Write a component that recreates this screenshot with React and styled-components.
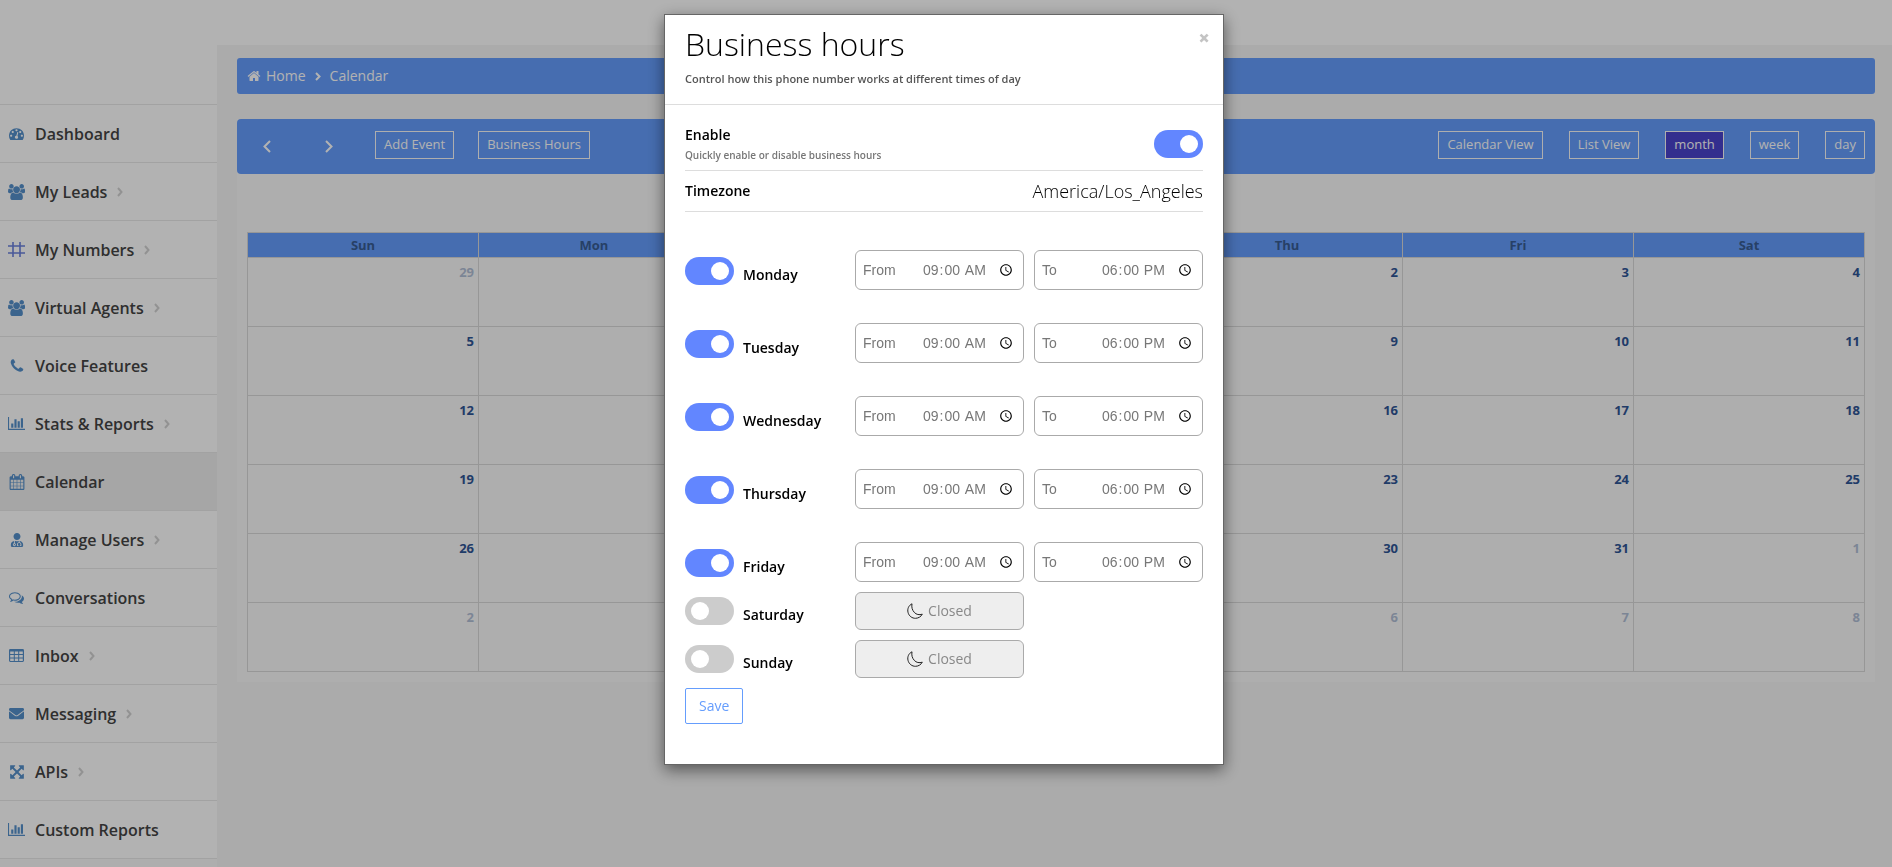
import React from "react";
import styled, { createGlobalStyle, css } from "styled-components";
import { FaUserMd, FaEnvelope } from "react-icons/fa";

const Global = createGlobalStyle`
  *, *::before, *::after { box-sizing: border-box; }
  body {
    margin: 0;
    background: #f5f5f5;
    font-family: "Open Sans", sans-serif;
    font-size: 14px;
    line-height: 20px;
    color: #000;
    overflow: hidden;
  }
  button, input { font-family: inherit; }
`;

const blue = "#659dfd";

const Page = styled.div`
  display: flex;
  height: 100vh;
  overflow: hidden;
`;

const Sidebar = styled.aside`
  flex: 0 0 217px;
  background: #fafafa;
`;

const Brand = styled.div`
  height: 104px;
  background: #fff;
`;

const NavList = styled.ul`
  list-style: none;
  margin: 0;
  padding: 0;
  border-bottom: 1px solid #e9e9e9;
`;

const NavItem = styled.li`
  border-top: 1px solid #e9e9e9;
  background: ${(p) => (p.$active ? "#eeeeee" : "#ffffff")};
`;

const NavLink = styled.a`
  display: flex;
  align-items: center;
  height: 57px;
  color: #444;
  font-size: 16px;
  font-weight: 600;
  text-decoration: none;
  > span { margin-right: 10px; }
`;

const NavIcon = styled.i`
  display: flex;
  justify-content: center;
  width: 33px;
  margin-right: 2px;
  color: ${(p) => p.$tint || "#5590cb"};
`;

const Main = styled.div`
  flex: 1;
  min-width: 0;
`;

const TopBar = styled.header`
  height: 45px;
  background: #fff;
`;

const Content = styled.main`
  padding: 13px 17px 0 20px;
`;

const Breadcrumb = styled.nav`
  display: flex;
  align-items: center;
  gap: 9px;
  height: 36px;
  padding: 0 10px;
  border-radius: 3px;
  background: ${blue};
  color: #fff;
`;

const Crumb = styled.a`
  display: flex;
  align-items: center;
  gap: 5px;
  color: #fff;
  text-decoration: none;
`;

const Panel = styled.section`
  margin-top: 25px;
  padding-bottom: 10px;
  background: #f9f9f9;
`;

const Toolbar = styled.div`
  display: flex;
  align-items: center;
  justify-content: space-between;
  height: 55px;
  padding: 0 10px 3px 14px;
  border-radius: 4px;
  background: ${blue};
`;

const ButtonGroup = styled.div`
  display: flex;
  align-items: center;
  gap: ${(p) => p.$gap};
`;

const ArrowButton = styled.button`
  display: flex;
  align-items: center;
  justify-content: center;
  width: 32px;
  height: 28px;
  margin-right: 6px;
  padding: 3px 0 0;
  border: 0;
  background: none;
  color: #fff;
`;

const ToolButton = styled.button`
  height: 28px;
  padding: 0 8px 2px;
  border: 1px solid #f9f9f9;
  background: ${(p) => (p.$active ? "#4a43cc" : "transparent")};
  color: #fff;
  font-size: 13px;
  line-height: 20px;
`;

const MonthTable = styled.table`
  width: calc(100% - 20px);
  margin: 58px 10px 0;
  border-collapse: collapse;
  table-layout: fixed;
  th, td { border: 1px solid #d8d8d8; }
  th {
    height: 25px;
    padding: 0;
    background: ${blue};
    color: #385c92;
    font-size: 13px;
    line-height: 20px;
    font-weight: 700;
  }
  td {
    height: 69px;
    padding: 4px;
    vertical-align: top;
    text-align: right;
  }
`;

const DayNumber = styled.span`
  font-size: 13px;
  font-weight: 700;
  color: #2f5596;
  opacity: ${(p) => (p.$muted ? 0.35 : 1)};
`;

const Overlay = styled.div`
  position: fixed;
  inset: 0;
  display: flex;
  align-items: flex-start;
  justify-content: center;
  padding: 14px 4px 0 0;
  background: rgba(0, 0, 0, 0.3);
`;

const Modal = styled.div`
  width: 560px;
  border: 1px solid #666;
  background: #fff;
  box-shadow: 0 5px 15px rgba(0, 0, 0, 0.5);
`;

const ModalHeader = styled.header`
  display: flex;
  justify-content: space-between;
  align-items: flex-start;
  padding: 9px 13px 15px 20px;
  border-bottom: 1px solid #ddd;
`;

const Title = styled.h1`
  margin: 0 0 5px;
  font-size: 32px;
  line-height: 40px;
  font-weight: 300;
`;

const Subtitle = styled.p`
  margin: 0;
  color: #555;
  font-size: 11px;
  font-weight: 600;
`;

const CloseButton = styled.button`
  margin-top: 4px;
  padding: 0;
  border: 0;
  background: none;
  color: #c4c4c4;
  font-size: 20px;
  line-height: 20px;
  font-weight: 800;
`;

const ModalBody = styled.form`
  padding: 0 20px 40px;
`;

const SettingRow = styled.div`
  display: flex;
  align-items: center;
  justify-content: space-between;
  border-bottom: 1px solid #ddd;
  ${(p) => (p.$tall ? css`padding: 20px 0 7px;` : css`height: 41px;`)}
`;

const Label = styled.label`
  display: block;
  font-size: 14px;
  font-weight: 600;
`;

const Hint = styled.p`
  margin: 2px 0 0;
  color: #777;
  font-size: 10px;
  line-height: 16px;
  font-weight: 600;
`;

const Zone = styled.output`
  font-size: 18px;
  font-weight: 300;
`;

const Switch = styled.input.attrs({ type: "checkbox" })`
  appearance: none;
  flex: none;
  display: flex;
  align-items: center;
  width: 49px;
  height: 28px;
  margin: 0;
  padding: 0 5px 0 6px;
  border-radius: 14px;
  background: #ccc;
  &::before {
    content: "";
    width: 18px;
    height: 18px;
    border-radius: 50%;
    background: #fff;
  }
  &:checked {
    justify-content: flex-end;
    background: #6286ff;
  }
`;

const Days = styled.div`
  padding-top: 5px;
`;

const DayRow = styled.div`
  display: grid;
  grid-template-columns: 160px 1fr 1fr;
  gap: 10px;
  align-items: end;
  margin-top: ${(p) => (p.$closed ? "10px" : "33px")};
`;

const DayName = styled.div`
  display: flex;
  align-items: flex-end;
  gap: 9px;
  padding-bottom: 5px;
`;

const TimeField = styled.label`
  display: flex;
  align-items: center;
  justify-content: space-between;
  height: 40px;
  padding: 0 6px 0 7px;
  border: 1px solid #aaa;
  border-radius: 6px;
  color: #777;
  font-family: "Liberation Sans", sans-serif;
  font-size: 14px;
`;

const TimeInput = styled.input.attrs({ type: "time" })`
  width: 95px;
  padding: 0;
  border: 0;
  outline: 0;
  background: none;
  color: #777;
  font-size: 14px;
  &::-webkit-calendar-picker-indicator { margin-inline-start: 0; }
`;

const Closed = styled.div`
  display: flex;
  align-items: center;
  justify-content: center;
  gap: 5px;
  height: 38px;
  border: 1px solid #aaa;
  border-radius: 6px;
  background: #eee;
  color: #888;
`;

const SaveButton = styled.button`
  height: 36px;
  margin-top: 10px;
  padding: 0 13px;
  border: 1px solid ${blue};
  border-radius: 2px;
  background: #fff;
  color: ${blue};
  font-size: 14px;
  line-height: 20px;
`;

const Glyph = ({ w = 1792, size = 16, d }) => (
  <svg width={(w / 1792) * size} height={size} viewBox={`0 0 ${w} 1792`} fill="currentColor" aria-hidden="true">
    <path d={d} />
  </svg>
);

const Chevron = ({ left, w = 6, h = 10, stroke = 2, color = "currentColor" }) => (
  <svg width={w} height={h} viewBox={`0 0 ${w} ${h}`} fill="none" stroke={color} strokeWidth={stroke} aria-hidden="true">
    <path d={left ? `M${w - 1} 1L1.5 ${h / 2}L${w - 1} ${h - 1}` : `M1 1L${w - 1.5} ${h / 2}L1 ${h - 1}`} />
  </svg>
);

const paths = {
  home: "M1472 992v480q0 26-19 45t-45 19h-384v-384h-256v384h-384q-26 0-45-19t-19-45v-480q0-1 .5-3t.5-3l575-474 575 474q1 2 1 6zm223-69l-62 74q-8 9-21 11h-3q-13 0-21-7l-692-577-692 577q-12 8-24 7-13-2-21-11l-62-74q-8-10-7-23.5t11-21.5l719-599q32-26 76-26t76 26l244 204v-195q0-14 9-23t23-9h192q14 0 23 9t9 23v408l219 182q10 8 11 21.5t-7 23.5z",
  gauge: "M384 1152q0-53-37.5-90.5t-90.5-37.5-90.5 37.5-37.5 90.5 37.5 90.5 90.5 37.5 90.5-37.5 37.5-90.5zm192-448q0-53-37.5-90.5t-90.5-37.5-90.5 37.5-37.5 90.5 37.5 90.5 90.5 37.5 90.5-37.5 37.5-90.5zm428 481l101-382q6-26-7.5-48.5t-38.5-29.5-48 6.5-30 39.5l-101 382q-60 5-107 43.5t-63 98.5q-20 77 20 146t117 89 146-20 89-117q16-60-6-117t-72-91zm660-33q0-53-37.5-90.5t-90.5-37.5-90.5 37.5-37.5 90.5 37.5 90.5 90.5 37.5 90.5-37.5 37.5-90.5zm-640-640q0-53-37.5-90.5t-90.5-37.5-90.5 37.5-37.5 90.5 37.5 90.5 90.5 37.5 90.5-37.5 37.5-90.5zm448 192q0-53-37.5-90.5t-90.5-37.5-90.5 37.5-37.5 90.5 37.5 90.5 90.5 37.5 90.5-37.5 37.5-90.5zm320 448q0 261-141 483-19 29-54 29h-1402q-35 0-54-29-141-221-141-483 0-182 71-348t191-286 286-191 348-71 348 71 286 191 191 286 71 348z",
  users: "M593 896q-162 5-265 128h-134q-82 0-138-40.5t-56-118.5q0-353 124-353 6 0 43.5 21t97.5 42.5 119 21.5q67 0 133-23-5 37-5 66 0 139 81 256zm1071 637q0 120-73 189.5t-194 69.5h-874q-121 0-194-69.5t-73-189.5q0-53 3.5-103.5t14-109 26.5-108.5 43-97.5 62-81 85.5-53.5 111.5-20q10 0 43 21.5t73 48 107 48 135 21.5 135-21.5 107-48 73-48 43-21.5q61 0 111.5 20t85.5 53.5 62 81 43 97.5 26.5 108.5 14 109 3.5 103.5zm-1024-1277q0 106-75 181t-181 75-181-75-75-181 75-181 181-75 181 75 75 181zm704 384q0 159-112.5 271.5t-271.5 112.5-271.5-112.5-112.5-271.5 112.5-271.5 271.5-112.5 271.5 112.5 112.5 271.5zm576 225q0 78-56 118.5t-138 40.5h-134q-103-123-265-128 81-117 81-256 0-29-5-66 66 23 133 23 59 0 119-21.5t97.5-42.5 43.5-21q124 0 124 353zm-128-609q0 106-75 181t-181 75-181-75-75-181 75-181 181-75 181 75 75 181z",
  phone: "M1600 1240q0 27-10 70.5t-21 68.5q-21 50-122 106-94 51-186 51-27 0-53-3.5t-57.5-12.5-47-14.5-55.5-20.5-49-18q-98-35-175-83-127-79-264-216t-216-264q-48-77-83-175-3-9-18-49t-20.5-55.5-14.5-47-12.5-57.5-3.5-53q0-92 51-186 56-101 106-122 25-11 68.5-21t70.5-10q14 0 21 3 18 6 53 76 11 19 30 54t35 63.5 31 53.5q3 4 17.5 25t21.5 35.5 7 28.5q0 20-28.5 50t-62 55-62 53-28.5 46q0 9 5 22.5t8.5 20.5 14 24 11.5 19q76 137 174 235t235 174q2 1 19 11.5t24 14 20.5 8.5 22.5 5q18 0 46-28.5t53-62 55-62 50-28.5q14 0 28.5 7t35.5 21.5 25 17.5q25 15 53.5 31t63.5 35 54 30q70 35 76 53 3 7 3 21z",
  chart: "M640 896v512h-256v-512h256zm384-512v1024h-256v-1024h256zm1024 1152v128h-2048v-1536h128v1408h1920zm-640-896v768h-256v-768h256zm384-384v1152h-256v-1152h256z",
  calendar: "M192 1664h288v-288h-288v288zm352 0h320v-288h-320v288zm-352-352h288v-320h-288v320zm352 0h320v-320h-320v320zm-352-384h288v-288h-288v288zm736 736h320v-288h-320v288zm-384-736h320v-288h-320v288zm768 736h288v-288h-288v288zm-384-352h320v-320h-320v320zm-352-864v-288q0-13-9.5-22.5t-22.5-9.5h-64q-13 0-22.5 9.5t-9.5 22.5v288q0 13 9.5 22.5t22.5 9.5h64q13 0 22.5-9.5t9.5-22.5zm736 864h288v-320h-288v320zm-384-384h320v-288h-320v288zm384 0h288v-288h-288v288zm32-480v-288q0-13-9.5-22.5t-22.5-9.5h-64q-13 0-22.5 9.5t-9.5 22.5v288q0 13 9.5 22.5t22.5 9.5h64q13 0 22.5-9.5t9.5-22.5zm384-64v1280q0 52-38 90t-90 38h-1408q-52 0-90-38t-38-90v-1280q0-52 38-90t90-38h128v-96q0-66 47-113t113-47h64q66 0 113 47t47 113v96h384v-96q0-66 47-113t113-47h64q66 0 113 47t47 113v96h128q52 0 90 38t38 90z",
  chat: "M704 384q-153 0-286 52t-211.5 141-78.5 191q0 82 53 158t149 132l97 56-35 84q34-20 62-39l44-31 53 10q78 14 153 14 153 0 286-52t211.5-141 78.5-191-78.5-191-211.5-141-286-52zm0-128q191 0 353.5 68.5t256.5 186.5 94 257-94 257-256.5 186.5-353.5 68.5q-86 0-176-16-124 88-278 128-36 9-86 16h-3q-11 0-20.5-8t-11.5-21q-1-3-1-6.5t.5-6.5 2-6l2.5-5 3.5-5.5 4-5 4.5-5 4-4.5q5-6 23-25t26-29.5 22.5-29 25-38.5 20.5-44q-124-72-195-177t-71-224q0-139 94-257t256.5-186.5 353.5-68.5zm822 1169q10 24 20.5 44t25 38.5 22.5 29 26 29.5 23 25q1 1 4 4.5t4.5 5 4 5 3.5 5.5l2.5 5 2 6 .5 6.5-1 6.5q-3 14-13 22t-22 7q-50-7-86-16-154-40-278-128-90 16-176 16-271 0-472-132 58 4 88 4 161 0 309-45t264-129q125-92 192-212t67-254q0-77-23-152 129 71 204 178t75 230q0 120-71 224.5t-195 176.5z",
  arrows: "M1411 541l-355 355 355 355 144-144q29-31 70-14 39 17 39 59v448q0 26-19 45t-45 19h-448q-42 0-59-40-17-39 14-69l144-144-355-355-355 355 144 144q31 30 14 69-17 40-59 40h-448q-26 0-45-19t-19-45v-448q0-42 40-59 39-17 69 14l144 144 355-355-355-355-144 144q-19 19-45 19-12 0-24-5-40-17-40-59v-448q0-26 19-45t45-19h448q42 0 59 40 17 39-14 69l-144 144 355 355 355-355-144-144q-31-30-14-69 17-40 59-40h448q26 0 45 19t19 45v448q0 42-39 59-13 5-25 5-26 0-45-19z",
};

const HashIcon = () => (
  <svg width="17" height="15" viewBox="0 0 17 15" fill="none" stroke="currentColor" strokeWidth="1.6" aria-hidden="true">
    <path d="M5 0V15M12 0V15M0 4H17M0 11H17" />
  </svg>
);

const TableIcon = () => (
  <svg width="15" height="13" viewBox="0 0 15 12" preserveAspectRatio="none" aria-hidden="true">
    <path
      fill="currentColor"
      fillRule="evenodd"
      d="M1.3 0H13.7Q15 0 15 1.3V10.7Q15 12 13.7 12H1.3Q0 12 0 10.7V1.3Q0 0 1.3 0ZM1.2 2.4V4.6H4.8V2.4ZM5.8 2.4V4.6H9.2V2.4ZM10.2 2.4V4.6H13.8V2.4ZM1.2 5.6V7.8H4.8V5.6ZM5.8 5.6V7.8H9.2V5.6ZM10.2 5.6V7.8H13.8V5.6ZM1.2 8.8V11H4.8V8.8ZM5.8 8.8V11H9.2V8.8ZM10.2 8.8V11H13.8V8.8Z"
    />
  </svg>
);

const MoonIcon = () => (
  <svg width="16" height="16" viewBox="0 0 16 16" fill="none" stroke="#222" strokeWidth="1" strokeLinejoin="round" aria-hidden="true">
    <path d="M5 .8C1.6 2.4.2 6 1 9.3C1.9 13 5 15.4 8.6 15.3C11.6 15.2 14 13.6 15.3 11.2C12.2 12.2 9.3 11.6 7.3 9.4C5.1 7 4.4 4 5 .8Z" />
  </svg>
);

const nav = [
  { text: "Dashboard", icon: <Glyph d={paths.gauge} size={15} /> },
  { text: "My Leads", icon: <Glyph d={paths.users} w={1920} />, more: true },
  { text: "My Numbers", icon: <HashIcon />, more: true, tint: "#6a80dc" },
  { text: "Virtual Agents", icon: <Glyph d={paths.users} w={1920} />, more: true },
  { text: "Voice Features", icon: <Glyph d={paths.phone} /> },
  { text: "Stats & Reports", icon: <Glyph d={paths.chart} w={2048} size={15} />, more: true },
  { text: "Calendar", icon: <Glyph d={paths.calendar} />, active: true },
  { text: "Manage Users", icon: <FaUserMd size={14} />, more: true },
  { text: "Conversations", icon: <Glyph d={paths.chat} size={15} /> },
  { text: "Inbox", icon: <TableIcon />, more: true },
  { text: "Messaging", icon: <FaEnvelope size={15} />, more: true },
  { text: "APIs", icon: <Glyph d={paths.arrows} />, more: true },
  { text: "Custom Reports", icon: <Glyph d={paths.chart} w={2048} size={15} /> },
];

const weekdays = ["Sun", "Mon", "Tue", "Wed", "Thu", "Fri", "Sat"];

const weeks = [
  [29, 30, 31, 1, 2, 3, 4],
  [5, 6, 7, 8, 9, 10, 11],
  [12, 13, 14, 15, 16, 17, 18],
  [19, 20, 21, 22, 23, 24, 25],
  [26, 27, 28, 29, 30, 31, 1],
  [2, 3, 4, 5, 6, 7, 8],
];

const isOtherMonth = (week, day) =>
  (week === 0 && day > 20) || (week === 4 && day < 10) || week === 5;

const hours = [
  { day: "Monday", open: true },
  { day: "Tuesday", open: true },
  { day: "Wednesday", open: true },
  { day: "Thursday", open: true },
  { day: "Friday", open: true },
  { day: "Saturday", open: false },
  { day: "Sunday", open: false },
];

function BusinessHoursModal() {
  return (
    <Modal role="dialog" aria-labelledby="hours-title">
      <ModalHeader>
        <div>
          <Title id="hours-title">Business hours</Title>
          <Subtitle>Control how this phone number works at different times of day</Subtitle>
        </div>
        <CloseButton type="button" aria-label="Close">×</CloseButton>
      </ModalHeader>
      <ModalBody>
        <SettingRow $tall>
          <div>
            <Label htmlFor="enable">Enable</Label>
            <Hint>Quickly enable or disable business hours</Hint>
          </div>
          <Switch id="enable" defaultChecked />
        </SettingRow>
        <SettingRow>
          <Label htmlFor="zone">Timezone</Label>
          <Zone id="zone">America/Los_Angeles</Zone>
        </SettingRow>
        <Days>
          {hours.map(({ day, open }) => (
            <DayRow key={day} $closed={!open}>
              <DayName>
                <Switch id={day} defaultChecked={open} />
                <Label htmlFor={day}>{day}</Label>
              </DayName>
              {open ? (
                <>
                  <TimeField>From<TimeInput defaultValue="09:00" /></TimeField>
                  <TimeField>To<TimeInput defaultValue="18:00" /></TimeField>
                </>
              ) : (
                <Closed><MoonIcon />Closed</Closed>
              )}
            </DayRow>
          ))}
        </Days>
        <SaveButton type="button">Save</SaveButton>
      </ModalBody>
    </Modal>
  );
}

export default function App() {
  return (
    <>
      <Global />
      <Page>
        <Sidebar>
          <Brand />
          <NavList>
            {nav.map((item) => (
              <NavItem key={item.text} $active={item.active}>
                <NavLink href="#">
                  <NavIcon $tint={item.tint}>{item.icon}</NavIcon>
                  <span>{item.text}</span>
                  {item.more && <Chevron color="#d2d2d2" />}
                </NavLink>
              </NavItem>
            ))}
          </NavList>
        </Sidebar>
        <Main>
          <TopBar />
          <Content>
            <Breadcrumb>
              <Crumb href="#"><Glyph d={paths.home} size={14} />Home</Crumb>
              <Chevron h={9} />
              <span>Calendar</span>
            </Breadcrumb>
            <Panel>
              <Toolbar>
                <ButtonGroup $gap="24px">
                  <ArrowButton aria-label="Previous"><Chevron left w={8} h={13} /></ArrowButton>
                  <ArrowButton aria-label="Next"><Chevron w={8} h={13} /></ArrowButton>
                  <ToolButton>Add Event</ToolButton>
                  <ToolButton>Business Hours</ToolButton>
                </ButtonGroup>
                <ButtonGroup $gap="26px">
                  <ToolButton>Calendar View</ToolButton>
                  <ToolButton>List View</ToolButton>
                  <ToolButton $active>month</ToolButton>
                  <ToolButton>week</ToolButton>
                  <ToolButton>day</ToolButton>
                </ButtonGroup>
              </Toolbar>
              <MonthTable>
                <thead>
                  <tr>{weekdays.map((d) => <th key={d}>{d}</th>)}</tr>
                </thead>
                <tbody>
                  {weeks.map((week, i) => (
                    <tr key={i}>
                      {week.map((day) => (
                        <td key={day}><DayNumber $muted={isOtherMonth(i, day)}>{day}</DayNumber></td>
                      ))}
                    </tr>
                  ))}
                </tbody>
              </MonthTable>
            </Panel>
          </Content>
        </Main>
      </Page>
      <Overlay>
        <BusinessHoursModal />
      </Overlay>
    </>
  );
}
